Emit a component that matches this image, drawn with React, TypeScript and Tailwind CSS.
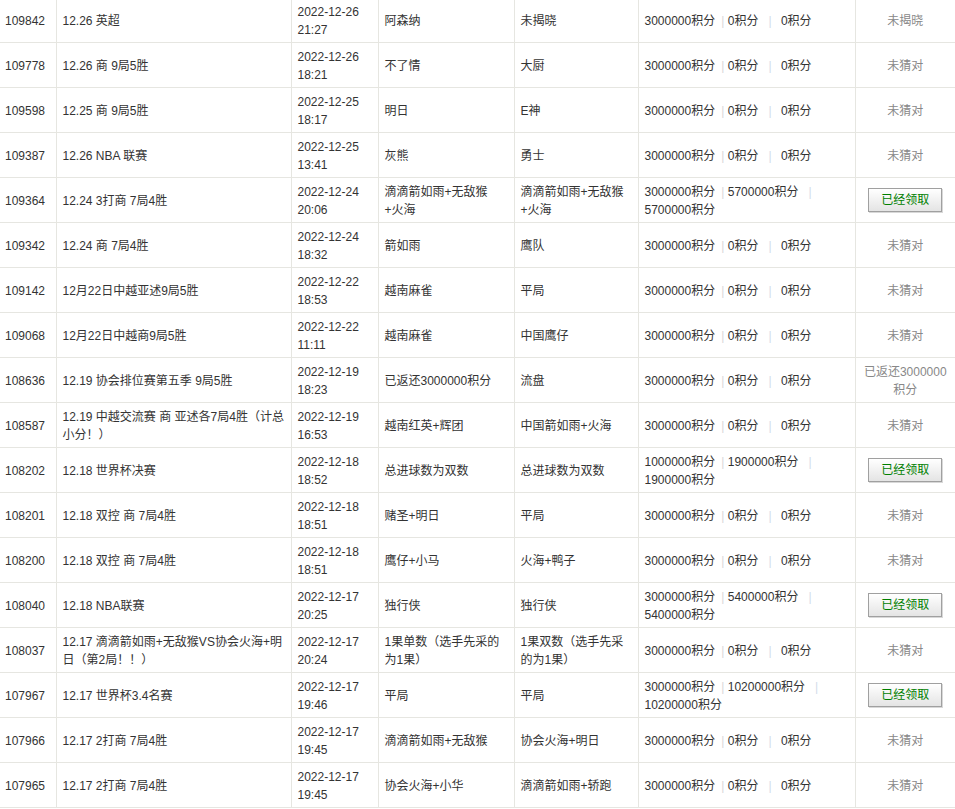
import React from 'react'

type Row = {
    id: string
    title: string
    date: string
    time: string
    a: string
    b: string
    pts: [string, string, string]
    status: 'btn' | string
}

const rows: Row[] = [
    { id: '109842', title: '12.26 英超', date: '2022-12-26', time: '21:27', a: '阿森纳', b: '未揭晓', pts: ['3000000', '0', '0'], status: '未揭晓' },
    { id: '109778', title: '12.26 商 9局5胜', date: '2022-12-26', time: '18:21', a: '不了情', b: '大厨', pts: ['3000000', '0', '0'], status: '未猜对' },
    { id: '109598', title: '12.25 商 9局5胜', date: '2022-12-25', time: '18:17', a: '明日', b: 'E神', pts: ['3000000', '0', '0'], status: '未猜对' },
    { id: '109387', title: '12.26 NBA 联赛', date: '2022-12-25', time: '13:41', a: '灰熊', b: '勇士', pts: ['3000000', '0', '0'], status: '未猜对' },
    { id: '109364', title: '12.24 3打商 7局4胜', date: '2022-12-24', time: '20:06', a: '滴滴箭如雨+无敌猴+火海', b: '滴滴箭如雨+无敌猴+火海', pts: ['3000000', '5700000', '5700000'], status: 'btn' },
    { id: '109342', title: '12.24 商 7局4胜', date: '2022-12-24', time: '18:32', a: '箭如雨', b: '鹰队', pts: ['3000000', '0', '0'], status: '未猜对' },
    { id: '109142', title: '12月22日中越亚述9局5胜', date: '2022-12-22', time: '18:53', a: '越南麻雀', b: '平局', pts: ['3000000', '0', '0'], status: '未猜对' },
    { id: '109068', title: '12月22日中越商9局5胜', date: '2022-12-22', time: '11:11', a: '越南麻雀', b: '中国鹰仔', pts: ['3000000', '0', '0'], status: '未猜对' },
    { id: '108636', title: '12.19 协会排位赛第五季 9局5胜', date: '2022-12-19', time: '18:23', a: '已返还3000000积分', b: '流盘', pts: ['3000000', '0', '0'], status: '已返还3000000积分' },
    { id: '108587', title: '12.19 中越交流赛 商 亚述各7局4胜（计总小分！）', date: '2022-12-19', time: '16:53', a: '越南红英+辉团', b: '中国箭如雨+火海', pts: ['3000000', '0', '0'], status: '未猜对' },
    { id: '108202', title: '12.18 世界杯决赛', date: '2022-12-18', time: '18:52', a: '总进球数为双数', b: '总进球数为双数', pts: ['1000000', '1900000', '1900000'], status: 'btn' },
    { id: '108201', title: '12.18 双控 商 7局4胜', date: '2022-12-18', time: '18:51', a: '赌圣+明日', b: '平局', pts: ['3000000', '0', '0'], status: '未猜对' },
    { id: '108200', title: '12.18 双控 商 7局4胜', date: '2022-12-18', time: '18:51', a: '鹰仔+小马', b: '火海+鸭子', pts: ['3000000', '0', '0'], status: '未猜对' },
    { id: '108040', title: '12.18 NBA联赛', date: '2022-12-17', time: '20:25', a: '独行侠', b: '独行侠', pts: ['3000000', '5400000', '5400000'], status: 'btn' },
    { id: '108037', title: '12.17 滴滴箭如雨+无敌猴VS协会火海+明日（第2局！！）', date: '2022-12-17', time: '20:24', a: '1果单数（选手先采的为1果）', b: '1果双数（选手先采的为1果）', pts: ['3000000', '0', '0'], status: '未猜对' },
    { id: '107967', title: '12.17 世界杯3.4名赛', date: '2022-12-17', time: '19:46', a: '平局', b: '平局', pts: ['3000000', '10200000', '10200000'], status: 'btn' },
    { id: '107966', title: '12.17 2打商 7局4胜', date: '2022-12-17', time: '19:45', a: '滴滴箭如雨+无敌猴', b: '协会火海+明日', pts: ['3000000', '0', '0'], status: '未猜对' },
    { id: '107965', title: '12.17 2打商 7局4胜', date: '2022-12-17', time: '19:45', a: '协会火海+小华', b: '滴滴箭如雨+轿跑', pts: ['3000000', '0', '0'], status: '未猜对' },
]

const cell = 'border border-[#e6e6e1] pl-[6px] pr-[6px] pt-[2px] align-middle'

function Points({ pts }: { pts: [string, string, string] }) {
    return (
        <>
            <span className="whitespace-nowrap">{pts[0]}积分<span className="ml-[6px] text-[#d8d8d8]">|</span></span>{' '}
            <span className="whitespace-nowrap">{pts[1]}积分<span className="ml-[10px] mr-[6px] text-[#d2dcea]">|</span></span>{' '}
            <span className="whitespace-nowrap">{pts[2]}积分</span>
        </>
    )
}

export default function App() {
    return (
        <div className="w-[955px] overflow-hidden bg-white text-[12px] leading-[18px] text-[#333]" style={{ fontFamily: '"Liberation Sans", "Noto Sans CJK SC", sans-serif' }}>
            <table className="-mt-[3px] w-[955px] table-fixed border-collapse">
                <colgroup>
                    <col className="w-[56px]" />
                    <col className="w-[235px]" />
                    <col className="w-[87px]" />
                    <col className="w-[136px]" />
                    <col className="w-[124px]" />
                    <col className="w-[217px]" />
                    <col className="w-[100px]" />
                </colgroup>
                <tbody>
                    {rows.map((r) => (
                        <tr key={r.id} className="h-[45px]">
                            <td className={cell + ' border-l-0 text-left'}>
                                <span className="-ml-px">{r.id}</span>
                            </td>
                            <td className={cell + ' text-left'}>{r.title}</td>
                            <td className={cell + ' text-left'}>
                                {r.date}
                                <br />
                                {r.time}
                            </td>
                            <td className={cell + ' pr-[10px] text-left'}>{r.a}</td>
                            <td className={cell + ' pr-[10px] text-left'}>{r.b}</td>
                            <td className={cell + ' text-left'}>
                                <Points pts={r.pts} />
                            </td>
                            <td className={cell + ' border-r-0 text-center text-[#888]'}>
                                {r.status === 'btn' ? (
                                    <button className="-mt-[2px] h-[24px] w-[74px] border border-[#a0a0a0] bg-gradient-to-b from-white to-[#e4e4e4] text-[12px] text-[#008000] shadow-[1px_1px_0_#d8d8d8]">
                                        已经领取
                                    </button>
                                ) : (
                                    r.status
                                )}
                            </td>
                        </tr>
                    ))}
                </tbody>
            </table>
        </div>
    )
}
